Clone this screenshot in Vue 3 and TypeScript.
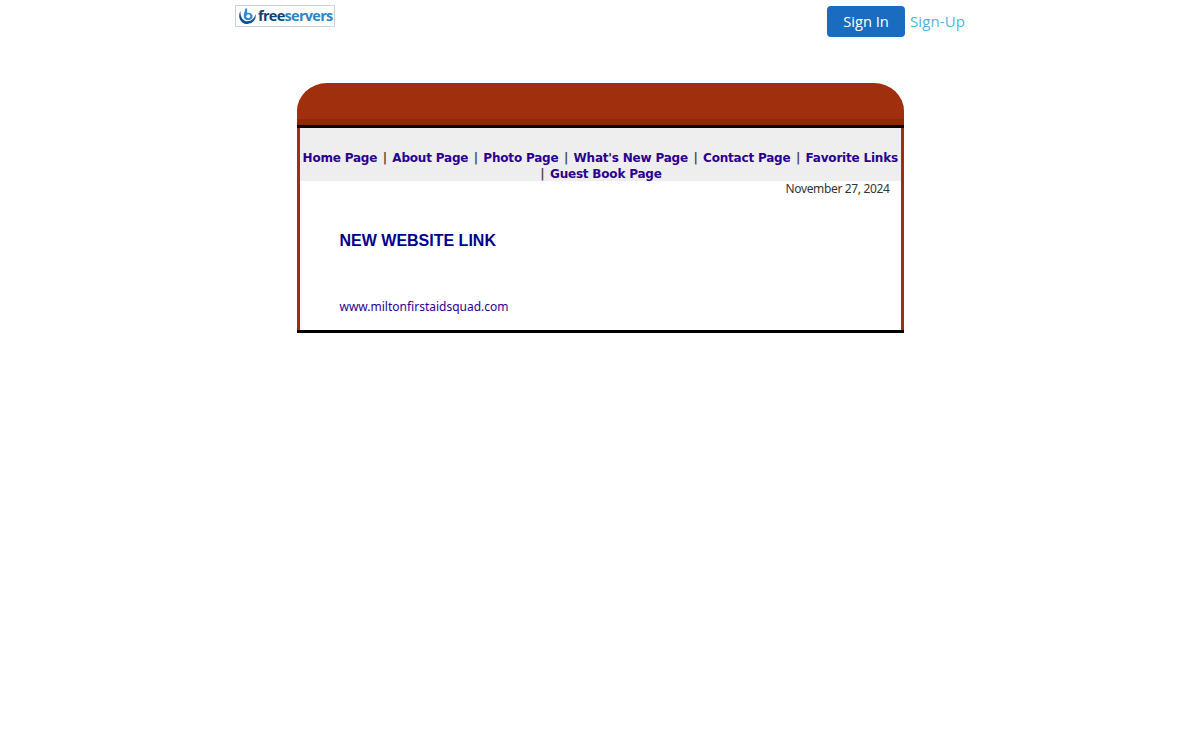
<script setup lang="ts">
const links: string[] = ['Home Page', 'About Page', 'Photo Page', "What's New Page", 'Contact Page', 'Favorite Links', 'Guest Book Page']
</script>

<template>
  <div class="page">
    <header class="top">
      <a class="logo">
        <svg class="mark" viewBox="0 0 20 20" width="19" height="19">
          <path d="M2.6 4 C0.2 8.5 1 13.5 4.6 16.2 C8.6 19 14.4 18 17.2 14 C18.6 12 19 9.6 18.4 7.4 C17.8 11.6 14.4 15 10 15 C5.2 15 2 10 2.6 4 Z" fill="#0f4c8a" />
          <path d="M7.6 1.5 L9.6 1.5 L9.6 6.2 C12.6 5.4 15.4 7.4 15.4 10 C15.4 12.6 13 14 10.6 14 C7.8 14 6 12 6 9.4 C6 6.6 7.6 4 7.6 1.5 Z" fill="#2a8ad4" />
          <circle cx="10.8" cy="9.8" r="2.1" fill="#fff" />
        </svg>
        <span class="free">free</span><span class="servers">servers</span>
      </a>
      <div class="auth">
        <a class="signin">Sign In</a>
        <a class="signup">Sign-Up</a>
      </div>
    </header>

    <main class="card">
      <div class="cap"></div>
      <div class="rule"></div>
      <div class="body">
        <nav class="nav">
          <template v-for="(l, i) in links" :key="l">
            <a class="nl">{{ l }}</a><span v-if="i < links.length - 1" class="sep"> | </span>
          </template>
        </nav>
        <div class="date">November 27, 2024</div>
        <h1 class="title">NEW WEBSITE LINK</h1>
        <a class="site">www.miltonfirstaidsquad.com</a>
      </div>
      <div class="rule"></div>
    </main>
  </div>
</template>

<style>
html, body { background: #fff; }
</style>

<style scoped>
.page { width: 1200px; height: 740px; overflow: hidden; }
.top { width: 730px; margin: 0 auto; display: flex; justify-content: space-between; align-items: flex-start; height: 83px; box-sizing: border-box; padding-top: 5px; }
.logo { width: 100px; height: 22px; box-sizing: border-box; border: 1px solid #c9d3dc; display: flex; align-items: center; padding-left: 2px; font: bold 14.5px/20px "Open Sans", sans-serif; letter-spacing: -0.7px; }
.mark { flex: none; margin-right: 1px; }
.free { color: #10406f; }
.servers { color: #2a86c8; }
.auth { display: flex; align-items: center; margin-top: 1px; }
.signin { width: 78px; height: 31px; background: #1a6cc0; color: #fff; border-radius: 4px; font: 14.7px/31px "Open Sans", sans-serif; text-align: center; }
.signup { margin-left: 5px; width: 55px; color: #4fb6dc; font: 15px/31px "Open Sans", sans-serif; letter-spacing: 0.1px; white-space: nowrap; }
.card { width: 607px; margin: 0 auto; }
.cap { height: 36px; background: #a02f0e; border-bottom: 6px solid #8f270b; border-radius: 30px 30px 0 0 / 28px 28px 0 0; }
.rule { height: 3px; background: #000; }
.body { border-left: 3px solid #a02f0e; border-right: 3px solid #a02f0e; height: 202px; }
.nav { background: #eee; padding: 22px 0 0 2px; height: 31px; text-align: center; font: bold 12px/16px "DejaVu Sans", sans-serif; letter-spacing: -0.2px; }
.nl { color: #2b0090; }
.sep { color: #444; padding: 0 1.5px; }
.date { text-align: right; padding-right: 11px; font: 12px/16px "Noto Sans", sans-serif; letter-spacing: -0.35px; color: #333; }
.title { margin: 34px 0 0 40px; font: bold 16px/20px "Liberation Sans", sans-serif; color: #00008b; }
.site { display: block; margin: 48px 0 0 40px; font: 12px/16px "Noto Sans", sans-serif; color: #2b0090; }
</style>
